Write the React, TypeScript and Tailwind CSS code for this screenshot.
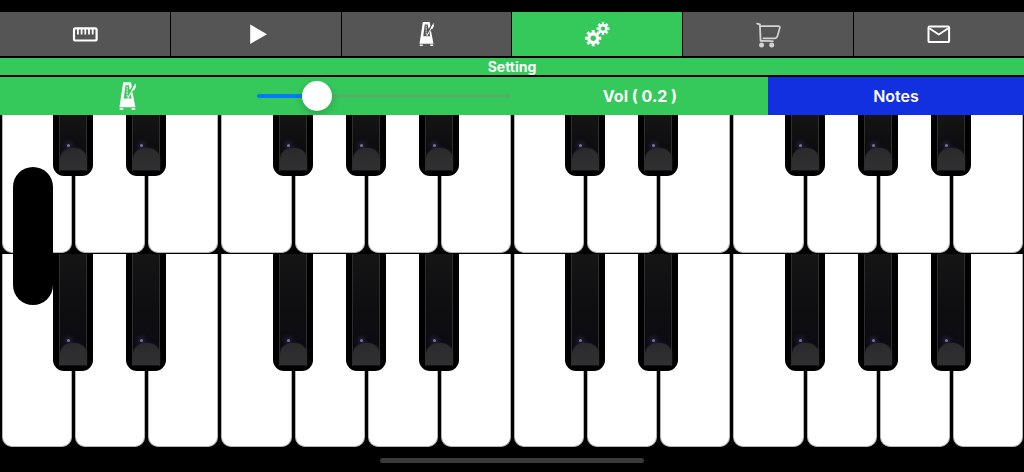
import { useState, type ReactNode } from "react";

type TabId = "ruler" | "play" | "metronome" | "setting" | "shop" | "mail";

const GREEN_TAB = "bg-[#35c95b]";
const GRAY_TAB = "bg-[#555555]";

// true = the white key has a black key on its right shoulder
const KEYS = [
  true, true, false,
  true, true, true, false,
  true, true, false,
  true, true, true, false,
];

function Icon({ children, className = "size-7" }: { children: ReactNode; className?: string }) {
  return (
    <svg
      viewBox="0 0 28 28"
      className={className}
      fill="none"
      stroke="currentColor"
      strokeLinecap="round"
      strokeLinejoin="round"
      aria-hidden="true"
    >
      {children}
    </svg>
  );
}

function RulerIcon() {
  return (
    <Icon>
      <rect x="3" y="8.3" width="22.6" height="12.2" rx="1.5" strokeWidth="2.2" />
      <path
        d="M6.9 9v5.6M10.6 9v5.6M14.3 9v5.6M18 9v5.6M21.7 9v5.6"
        strokeWidth="1.8"
        strokeLinecap="butt"
      />
    </Icon>
  );
}

function PlayIcon() {
  return (
    <Icon>
      <path d="M8.2 4.5v19.4L25 14.2z" fill="currentColor" stroke="none" />
    </Icon>
  );
}

function MetronomeIcon({ className }: { className?: string }) {
  return (
    <Icon className={className}>
      <path
        d="M9.8 2h6.8l.8 4-1.8 3-.9-4.5h-2.9L10.3 16.2h6.9l-.7-3.2 1.4-2.4 2.6 13.2H6.5z"
        fill="currentColor"
        stroke="none"
      />
      <path d="M13.2 6.2v9.4" strokeWidth="1.2" strokeOpacity="0.75" strokeDasharray="0.8 1.6" />
      <path d="M20.6 3.8 14 15.8" strokeWidth="1" />
      <path d="m20 5.8-1.2 2.4" strokeWidth="1.9" />
      <path d="M7.4 25.3h1.8M17.8 25.3h1.8" strokeWidth="1.6" />
    </Icon>
  );
}

function GearsIcon() {
  return (
    <Icon>
      <circle cx="10.2" cy="18.2" r="4.4" strokeWidth="3.4" />
      <circle
        cx="10.2"
        cy="18.2"
        r="6.8"
        strokeWidth="2.6"
        strokeLinecap="butt"
        pathLength="16"
        strokeDasharray="1.1 0.9"
        strokeDashoffset="0.55"
      />
      <circle cx="20" cy="8.6" r="3.5" strokeWidth="2.6" />
      <circle
        cx="20"
        cy="8.6"
        r="5.4"
        strokeWidth="2.2"
        strokeLinecap="butt"
        pathLength="16"
        strokeDasharray="1.1 0.9"
        strokeDashoffset="0.55"
      />
    </Icon>
  );
}

function CartIcon() {
  return (
    <Icon className="size-7 text-[#d2d2d2]">
      <path d="M3.2 3.6 5.9 4.4 6.6 20.9 18.8 21.2" strokeWidth="1.8" />
      <path d="M6.4 6.1h17.8c1.2 0 1.9.6 1.6 1.7l-2.4 8.5c-.4 1.4-1.2 2-2.6 2H9.4" strokeWidth="1.7" />
      <circle cx="7.6" cy="25" r="2.5" fill="currentColor" stroke="none" />
      <circle cx="17.7" cy="25" r="2.5" fill="currentColor" stroke="none" />
    </Icon>
  );
}

function MailIcon() {
  return (
    <Icon>
      <rect x="3.5" y="6.5" width="20.6" height="15.6" rx="1.2" strokeWidth="2" />
      <path d="m5 8.8 8.8 5.8 8.8-5.8" strokeWidth="1.8" />
    </Icon>
  );
}

const tabs: { id: TabId; label: string; icon: ReactNode }[] = [
  { id: "ruler", label: "Key size", icon: <RulerIcon /> },
  { id: "play", label: "Play", icon: <PlayIcon /> },
  { id: "metronome", label: "Metronome", icon: <MetronomeIcon /> },
  { id: "setting", label: "Setting", icon: <GearsIcon /> },
  { id: "shop", label: "Shop", icon: <CartIcon /> },
  { id: "mail", label: "Mail", icon: <MailIcon /> },
];

function BlackKey({ label, className }: { label: string; className: string }) {
  return (
    <button
      type="button"
      aria-label={label}
      className={`absolute top-0 -right-[21px] z-10 w-10 overflow-hidden rounded-b-[11px] bg-black ${className}`}
    >
      <span className="absolute inset-x-[6px] top-0 bottom-[5px] border-x border-[#2e2e2e] bg-linear-to-b from-[#151516] via-[#0e0e10] to-[#0c0a14]" />
      <span className="absolute bottom-[6px] left-[7px] h-[22px] w-[27px] rounded-t-[12px] bg-linear-to-b from-[#2b2b2d] to-[#303031] shadow-[0_0_2px_#2b2b2d]" />
      <span className="absolute bottom-[29px] left-[14px] size-[3px] rounded-full bg-[#77729a] shadow-[0_0_5px_2px_#2a2442]" />
    </button>
  );
}

function Keyboard({ name, blackKey }: { name: string; blackKey: string }) {
  return (
    <div className="grid grid-cols-14 gap-[3px] pr-px pl-[2px]">
      {KEYS.map((hasBlack, index) => (
        <div key={index} className="relative">
          <button
            type="button"
            aria-label={`${name} white key ${index + 1}`}
            className="block size-full rounded-b-[10px] border border-t-0 border-[#b4b4b4] bg-white"
          />
          {hasBlack ? (
            <BlackKey label={`${name} black key ${index + 1}`} className={blackKey} />
          ) : null}
        </div>
      ))}
    </div>
  );
}

export default function App() {
  const [tab, setTab] = useState<TabId>("setting");
  const [volume, setVolume] = useState(0.2);

  const percent = volume * 100;

  return (
    <div className="flex min-h-screen flex-col bg-black pt-3 font-['Inter',sans-serif] text-white">
      <nav className="grid h-11 grid-cols-6 gap-px">
        {tabs.map((item) => (
          <button
            key={item.id}
            type="button"
            aria-label={item.label}
            onClick={() => setTab(item.id)}
            className={`flex items-center justify-center ${
              tab === item.id ? GREEN_TAB : GRAY_TAB
            }`}
          >
            {item.icon}
          </button>
        ))}
      </nav>

      <h1 className="mt-[2px] bg-[#35c95b] text-center text-sm leading-[17px] font-bold">
        Setting
      </h1>

      <section className="mt-[2px] grid h-[38px] grid-cols-4 bg-[#35c95b] text-base font-bold">
        <button
          type="button"
          aria-label="Toggle metronome"
          className="flex items-center justify-center"
        >
          <MetronomeIcon className="size-8" />
        </button>
        <div className="flex items-center px-px">
          <input
            id="volume"
            type="range"
            min={0}
            max={1}
            step={0.1}
            value={volume}
            onChange={(event) => setVolume(Number(event.target.value))}
            style={{
              backgroundImage: `linear-gradient(to right, #087aff ${percent}%, #48b564 ${percent}%)`,
            }}
            className="h-1 w-full cursor-pointer appearance-none rounded-full [&::-webkit-slider-thumb]:size-[30px] [&::-webkit-slider-thumb]:appearance-none [&::-webkit-slider-thumb]:rounded-full [&::-webkit-slider-thumb]:bg-white [&::-webkit-slider-thumb]:shadow-[0_3px_8px_rgba(0,0,0,0.2)]"
          />
        </div>
        <label htmlFor="volume" className="flex items-center justify-center">
          Vol ( {volume.toFixed(1)} )
        </label>
        <button type="button" className="bg-[#1230df] font-semibold">
          Notes
        </button>
      </section>

      <main className="relative grid flex-1 grid-rows-[138fr_193fr] gap-px">
        <Keyboard name="Upper" blackKey="h-[61px]" />
        <Keyboard name="Lower" blackKey="h-[117px]" />
        {/* floating handle lying across both keyboards */}
        <div className="absolute top-[52px] left-[13px] z-20 h-[138px] w-10 rounded-full bg-black" />
      </main>

      <footer className="flex justify-center pt-[11px] pb-[9px]">
        <div className="h-[5px] w-[264px] rounded-full bg-[#3a3a3a]" />
      </footer>
    </div>
  );
}
